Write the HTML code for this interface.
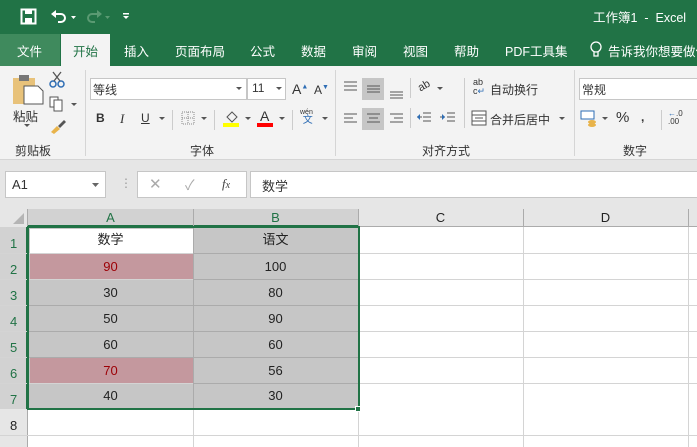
<!DOCTYPE html>
<html><head><meta charset="utf-8">
<style>
*{margin:0;padding:0;box-sizing:border-box}
body{width:697px;height:447px;overflow:hidden;background:#fff;font-family:"Liberation Sans","Noto Sans CJK SC",sans-serif;position:relative;font-size:12px;color:#222}
.a{position:absolute}
.t{color:#fff;font-size:12.5px}
.btn{position:absolute;font-size:12px;color:#333}
.cell{position:absolute;text-align:center;font-size:13px;color:#222;line-height:26px}
</style></head><body>
<!-- title bar -->
<div class="a" style="left:0;top:0;width:697px;height:66px;background:#217346"></div>
<svg class="a" style="left:20;top:8px;left:20px" width="18" height="18"><rect x="1.5" y="1.5" width="14" height="14" fill="none" stroke="#fff" stroke-width="2"/><rect x="5" y="2" width="7" height="4" fill="#fff"/><rect x="5" y="10" width="7" height="5" fill="#fff"/></svg>
<svg class="a" style="left:50px;top:8px" width="30" height="18"><path d="M4 6 h7 a4 4 0 0 1 0 8 h-3" fill="none" stroke="#fff" stroke-width="2"/><path d="M1 6 l5 -4 v8z" fill="#fff"/><path d="M21 8 h5 l-2.5 3z" fill="#fff"/></svg>
<svg class="a" style="left:85px;top:8px" width="30" height="18"><path d="M14 6 h-7 a4 4 0 0 0 0 8 h3" fill="none" stroke="#5a9a72" stroke-width="2"/><path d="M17 6 l-5 -4 v8z" fill="#5a9a72"/><path d="M20 8 h5 l-2.5 3z" fill="#5a9a72"/></svg>
<svg class="a" style="left:122px;top:12px" width="10" height="10"><rect x="1" y="1" width="6" height="1.5" fill="#fff"/><path d="M1 4 h6 l-3 3z" fill="#fff"/></svg>
<div class="a t" style="left:593px;top:7px;font-size:12.5px">工作簿1&nbsp; - &nbsp;Excel</div>
<!-- tabs -->
<div class="a" style="left:0;top:34px;width:60px;height:32px;background:#3f8a5d"></div>
<div class="a t" style="left:17px;top:41px">文件</div>
<div class="a" style="left:61px;top:34px;width:49px;height:32px;background:#f3f3f3"></div>
<div class="a" style="left:73px;top:41px;color:#217346;font-size:12.5px">开始</div>
<div class="a t" style="left:124px;top:41px">插入</div>
<div class="a t" style="left:175px;top:41px">页面布局</div>
<div class="a t" style="left:250px;top:41px">公式</div>
<div class="a t" style="left:301px;top:41px">数据</div>
<div class="a t" style="left:352px;top:41px">审阅</div>
<div class="a t" style="left:403px;top:41px">视图</div>
<div class="a t" style="left:454px;top:41px">帮助</div>
<div class="a t" style="left:505px;top:41px">PDF工具集</div>
<svg class="a" style="left:589px;top:40px" width="14" height="20"><circle cx="7" cy="7" r="5" fill="none" stroke="#fff" stroke-width="1.3"/><path d="M5 12 v4 h4 v-4" fill="none" stroke="#fff" stroke-width="1.3"/></svg>
<div class="a t" style="left:608px;top:41px;white-space:nowrap">告诉我你想要做什</div>
<!-- ribbon -->
<div class="a" style="left:0;top:66px;width:697px;height:94px;background:#f3f3f3;border-bottom:1px solid #d5d5d5"></div>
<div class="a" style="left:0;top:160px;width:697px;height:50px;background:#e6e6e6"></div>
<!-- clipboard -->
<svg class="a" style="left:12px;top:72px" width="32" height="34"><rect x="1" y="6" width="22" height="26" fill="#e8c27a"/><rect x="7" y="3" width="10" height="6" fill="#777"/><path d="M12 14 h14 l5 5 v13 h-19z" fill="#fff" stroke="#555"/></svg>
<div class="btn" style="left:13px;top:106px;font-size:12.5px">粘贴</div>
<svg class="a" style="left:24px;top:124px" width="8" height="5"><path d="M0 0 h6 l-3 3z" fill="#555"/></svg>
<svg class="a" style="left:49px;top:70px" width="18" height="18"><circle cx="4" cy="14" r="3" fill="none" stroke="#2e6db4" stroke-width="1.5"/><circle cx="12" cy="14" r="3" fill="none" stroke="#2e6db4" stroke-width="1.5"/><path d="M5 11 L12 2 M11 11 L4 2" stroke="#555" stroke-width="1.3"/></svg>
<svg class="a" style="left:49px;top:96px" width="30" height="16"><rect x="1" y="1" width="8" height="10" fill="#fff" stroke="#555"/><rect x="5" y="4" width="8" height="11" fill="#fff" stroke="#555"/><path d="M22 7 h6 l-3 3z" fill="#555"/></svg>
<svg class="a" style="left:49px;top:118px" width="18" height="16"><path d="M2 14 l6 -6 l3 3 l-6 5z" fill="#e8b34a"/><path d="M9 8 l6 -6 l2 2 l-6 6z" fill="#555"/></svg>
<div class="btn" style="left:15px;top:142px">剪贴板</div>
<div class="a" style="left:85px;top:70px;width:1px;height:86px;background:#d5d5d5"></div>
<!-- font -->
<div class="a" style="left:90px;top:78px;width:157px;height:22px;background:#fff;border:1px solid #c6c6c6"></div>
<div class="btn" style="left:93px;top:81px">等线</div>
<div class="a" style="left:247px;top:78px;width:39px;height:22px;background:#fff;border:1px solid #c6c6c6"></div>
<div class="btn" style="left:252px;top:81px">11</div>
<svg class="a" style="left:236px;top:87px" width="6" height="4"><path d="M0 0h6l-3 3z" fill="#555"/></svg>
<svg class="a" style="left:276px;top:87px" width="6" height="4"><path d="M0 0h6l-3 3z" fill="#555"/></svg>
<div class="btn" style="left:292px;top:81px;font-size:14px">A<sup style="font-size:7px;color:#2e6db4">▲</sup></div>
<div class="btn" style="left:314px;top:83px;font-size:12px">A<sup style="font-size:7px;color:#2e6db4">▼</sup></div>
<div class="btn" style="left:96px;top:111px;font-weight:bold">B</div>
<div class="btn" style="left:120px;top:111px;font-style:italic;font-family:'Liberation Serif',serif;font-size:13px">I</div>
<div class="btn" style="left:141px;top:111px;text-decoration:underline">U</div>
<svg class="a" style="left:159px;top:117px" width="6" height="4"><path d="M0 0h6l-3 3z" fill="#555"/></svg>
<div class="a" style="left:172px;top:110px;width:1px;height:20px;background:#ccc"></div>
<svg class="a" style="left:181px;top:111px" width="14" height="14"><rect x="1" y="1" width="12" height="12" fill="none" stroke="#888" stroke-dasharray="1 1"/><path d="M7 1v12M1 7h12" stroke="#888" stroke-dasharray="1 1"/></svg>
<svg class="a" style="left:201px;top:117px" width="6" height="4"><path d="M0 0h6l-3 3z" fill="#555"/></svg>
<div class="a" style="left:214px;top:110px;width:1px;height:20px;background:#ccc"></div>
<svg class="a" style="left:223px;top:109px" width="18" height="18"><path d="M4 8 l5 -5 l5 5 l-5 5z" fill="none" stroke="#555"/><rect x="0" y="14" width="16" height="4" fill="#ffff00"/></svg>
<svg class="a" style="left:245px;top:117px" width="6" height="4"><path d="M0 0h6l-3 3z" fill="#555"/></svg>
<div class="btn" style="left:260px;top:108px;font-size:14px">A</div>
<div class="a" style="left:257px;top:123px;width:16px;height:4px;background:#f00"></div>
<svg class="a" style="left:279px;top:117px" width="6" height="4"><path d="M0 0h6l-3 3z" fill="#555"/></svg>
<div class="a" style="left:292px;top:110px;width:1px;height:20px;background:#ccc"></div>
<div class="btn" style="left:300px;top:109px;font-size:7px;line-height:8px">wén<br><span style="color:#2e6db4;font-size:10px">&nbsp;文</span></div>
<svg class="a" style="left:322px;top:117px" width="6" height="4"><path d="M0 0h6l-3 3z" fill="#555"/></svg>
<div class="btn" style="left:190px;top:142px">字体</div>
<div class="a" style="left:335px;top:70px;width:1px;height:86px;background:#d5d5d5"></div>
<!-- alignment -->
<svg class="a" style="left:344px;top:78px" width="70" height="22"><path d="M0 4h13M0 8h13M0 12h13" stroke="#555"/><rect x="18" y="0" width="22" height="22" fill="#c6c6c6"/><path d="M23 8h13M23 11h13M23 14h13" stroke="#555"/><path d="M46 14h13M46 17h13M46 20h13" stroke="#555"/></svg>
<svg class="a" style="left:344px;top:108px" width="70" height="22"><path d="M0 6h13M0 10h9M0 14h13" stroke="#555"/><rect x="18" y="0" width="22" height="22" fill="#c6c6c6"/><path d="M23 6h13M25 10h9M23 14h13" stroke="#555"/><path d="M46 6h13M50 10h9M46 14h13" stroke="#555"/></svg>
<div class="a" style="left:410px;top:78px;width:1px;height:20px;background:#ccc"></div>
<div class="a" style="left:410px;top:108px;width:1px;height:20px;background:#ccc"></div>
<div class="btn" style="left:418px;top:80px;font-size:11px;transform:rotate(-30deg)">ab</div>
<svg class="a" style="left:437px;top:87px" width="6" height="4"><path d="M0 0h6l-3 3z" fill="#555"/></svg>
<svg class="a" style="left:417px;top:110px" width="44" height="16"><path d="M6 3h8M6 7h8M6 11h8M0 7h5" stroke="#555"/><path d="M0 7l3-3v6z" fill="#2e6db4"/><path d="M30 3h8M30 7h8M30 11h8M23 7h5" stroke="#555"/><path d="M28 7l-3-3v6z" fill="#2e6db4"/></svg>
<div class="a" style="left:464px;top:78px;width:1px;height:50px;background:#ccc"></div>
<div class="btn" style="left:473px;top:78px;font-size:9px;line-height:9px">ab<br>c<span style="color:#2e6db4">↵</span></div>
<div class="btn" style="left:490px;top:81px">自动换行</div>
<svg class="a" style="left:471px;top:110px" width="16" height="16"><rect x="1" y="1" width="14" height="14" fill="#fff" stroke="#555"/><path d="M1 5h14M1 11h14M4 8h8" stroke="#555"/></svg>
<div class="btn" style="left:490px;top:111px">合并后居中</div>
<svg class="a" style="left:559px;top:117px" width="6" height="4"><path d="M0 0h6l-3 3z" fill="#555"/></svg>
<div class="btn" style="left:422px;top:142px">对齐方式</div>
<div class="a" style="left:574px;top:70px;width:1px;height:86px;background:#d5d5d5"></div>
<!-- number -->
<div class="a" style="left:579px;top:78px;width:130px;height:22px;background:#fff;border:1px solid #c6c6c6"></div>
<div class="btn" style="left:582px;top:81px">常规</div>
<svg class="a" style="left:580px;top:109px" width="30" height="18"><rect x="1" y="2" width="13" height="8" fill="#fff" stroke="#2e6db4"/><ellipse cx="12" cy="13" rx="4" ry="2" fill="#e8b34a"/><ellipse cx="12" cy="16" rx="4" ry="2" fill="#e8b34a"/><path d="M22 8h6l-3 3z" fill="#555"/></svg>
<div class="btn" style="left:616px;top:109px;font-size:15px">%</div>
<div class="btn" style="left:641px;top:110px;font-weight:bold">,</div>
<div class="a" style="left:661px;top:110px;width:1px;height:20px;background:#ccc"></div>
<div class="btn" style="left:668px;top:110px;font-size:8px;line-height:8px"><span style="color:#2e6db4">←</span>.0<br>.00</div>
<div class="btn" style="left:623px;top:142px">数字</div>
<!-- formula bar -->
<div class="a" style="left:5px;top:171px;width:101px;height:27px;background:#fff;border:1px solid #c6c6c6"></div>
<div class="btn" style="left:12px;top:177px;font-size:13px">A1</div>
<svg class="a" style="left:92px;top:183px" width="8" height="5"><path d="M0 0h7l-3.5 4z" fill="#666"/></svg>
<div class="btn" style="left:120px;top:176px;color:#999">⋮</div>
<div class="a" style="left:137px;top:171px;width:110px;height:27px;background:#fff;border:1px solid #c6c6c6"></div>
<div class="btn" style="left:149px;top:175px;color:#aaa;font-size:15px">✕</div>
<div class="btn" style="left:185px;top:175px;color:#aaa;font-size:14px">✓</div>
<div class="btn" style="left:222px;top:176px;font-family:'Liberation Serif',serif;font-style:italic;font-size:13px;color:#444">f<span style="font-size:10px">x</span></div>
<div class="a" style="left:250px;top:171px;width:447px;height:27px;background:#fff;border:1px solid #c6c6c6;border-right:none"></div>
<div class="btn" style="left:262px;top:176px;font-size:13px">数学</div>
<!-- grid headers -->
<div class="a" style="left:0;top:209px;width:697px;height:18px;background:#e6e6e6;border-bottom:1px solid #ababab"></div>
<div class="a" style="left:0;top:209px;width:28px;height:238px;background:#e6e6e6;border-right:1px solid #ababab"></div>
<svg class="a" style="left:12px;top:212px" width="13" height="13"><path d="M12 1v11h-11z" fill="#b5b5b5"/></svg>
<div class="a" style="left:28px;top:209px;width:330px;height:18px;background:#d2d2d2;border-bottom:2px solid #217346"></div>
<div class="a" style="left:0;top:227px;width:28px;height:182px;background:#d2d2d2;border-right:2px solid #217346"></div>
<div class="a" style="left:193px;top:209px;width:1px;height:18px;background:#ababab"></div>
<div class="a" style="left:358px;top:209px;width:1px;height:18px;background:#ababab"></div>
<div class="a" style="left:523px;top:209px;width:1px;height:18px;background:#ababab"></div>
<div class="a" style="left:688px;top:209px;width:1px;height:18px;background:#ababab"></div>
<div class="a" style="left:28px;top:210px;width:165px;text-align:center;color:#217346;font-size:13px">A</div>
<div class="a" style="left:193px;top:210px;width:165px;text-align:center;color:#217346;font-size:13px">B</div>
<div class="a" style="left:358px;top:210px;width:165px;text-align:center;font-size:13px">C</div>
<div class="a" style="left:523px;top:210px;width:165px;text-align:center;font-size:13px">D</div>
<!-- gridlines -->
<div class="a" style="left:358px;top:227px;width:1px;height:220px;background:#d4d4d4"></div>
<div class="a" style="left:523px;top:227px;width:1px;height:220px;background:#d4d4d4"></div>
<div class="a" style="left:688px;top:227px;width:1px;height:220px;background:#d4d4d4"></div>
<div class="a" style="left:193px;top:409px;width:1px;height:38px;background:#d4d4d4"></div>
<!-- row lines -->
<div id="rows"></div>
<!-- selection fill -->
<div class="a" style="left:28px;top:227px;width:330px;height:182px;background:#c6c6c6"></div>
<div class="a" style="left:30px;top:229px;width:163px;height:24px;background:#fff"></div>
<div class="a" style="left:30px;top:254px;width:163px;height:25px;background:#c4989e"></div>
<div class="a" style="left:30px;top:358px;width:163px;height:25px;background:#c4989e"></div>
<div class="a" style="left:193px;top:227px;width:1px;height:182px;background:#ababab"></div>
<script></script>
<div class="a" style="left:0;top:253px;width:697px;height:1px;background:#d4d4d4"></div>
<div class="a" style="left:0;top:279px;width:697px;height:1px;background:#d4d4d4"></div>
<div class="a" style="left:0;top:305px;width:697px;height:1px;background:#d4d4d4"></div>
<div class="a" style="left:0;top:331px;width:697px;height:1px;background:#d4d4d4"></div>
<div class="a" style="left:0;top:357px;width:697px;height:1px;background:#d4d4d4"></div>
<div class="a" style="left:0;top:383px;width:697px;height:1px;background:#d4d4d4"></div>
<div class="a" style="left:0;top:435px;width:697px;height:1px;background:#d4d4d4"></div>
<div class="a" style="left:193px;top:279px;width:165px;height:1px;background:#ababab"></div>
<div class="a" style="left:28px;top:305px;width:330px;height:1px;background:#ababab"></div>
<div class="a" style="left:28px;top:331px;width:330px;height:1px;background:#ababab"></div>
<div class="a" style="left:28px;top:357px;width:330px;height:1px;background:#ababab"></div>
<div class="a" style="left:193px;top:383px;width:165px;height:1px;background:#ababab"></div>
<div class="a" style="left:193px;top:253px;width:165px;height:1px;background:#ababab"></div>
<!-- selection border -->
<div class="a" style="left:27px;top:226px;width:333px;height:184px;border:2px solid #217346"></div>
<div class="a" style="left:355px;top:406px;width:6px;height:6px;background:#217346;border:1px solid #fff"></div>
<!-- row numbers -->
<div class="a" style="left:0;top:234px;width:26px;text-align:center;color:#217346;font-size:13px;line-height:26px">
</div>
<div class="a" style="left:10px;top:236px;color:#217346;font-size:13px">1</div>
<div class="a" style="left:10px;top:262px;color:#217346;font-size:13px">2</div>
<div class="a" style="left:10px;top:288px;color:#217346;font-size:13px">3</div>
<div class="a" style="left:10px;top:314px;color:#217346;font-size:13px">4</div>
<div class="a" style="left:10px;top:340px;color:#217346;font-size:13px">5</div>
<div class="a" style="left:10px;top:366px;color:#217346;font-size:13px">6</div>
<div class="a" style="left:10px;top:392px;color:#217346;font-size:13px">7</div>
<div class="a" style="left:10px;top:418px;font-size:13px">8</div>
<!-- cells -->
<div class="cell" style="left:28px;top:227px;width:165px">数学</div>
<div class="cell" style="left:193px;top:227px;width:165px">语文</div>
<div class="cell" style="left:28px;top:254px;width:165px;color:#9c0006">90</div>
<div class="cell" style="left:193px;top:254px;width:165px">100</div>
<div class="cell" style="left:28px;top:280px;width:165px">30</div>
<div class="cell" style="left:193px;top:280px;width:165px">80</div>
<div class="cell" style="left:28px;top:306px;width:165px">50</div>
<div class="cell" style="left:193px;top:306px;width:165px">90</div>
<div class="cell" style="left:28px;top:332px;width:165px">60</div>
<div class="cell" style="left:193px;top:332px;width:165px">60</div>
<div class="cell" style="left:28px;top:358px;width:165px;color:#9c0006">70</div>
<div class="cell" style="left:193px;top:358px;width:165px">56</div>
<div class="cell" style="left:28px;top:383px;width:165px">40</div>
<div class="cell" style="left:193px;top:383px;width:165px">30</div>
</body></html>
